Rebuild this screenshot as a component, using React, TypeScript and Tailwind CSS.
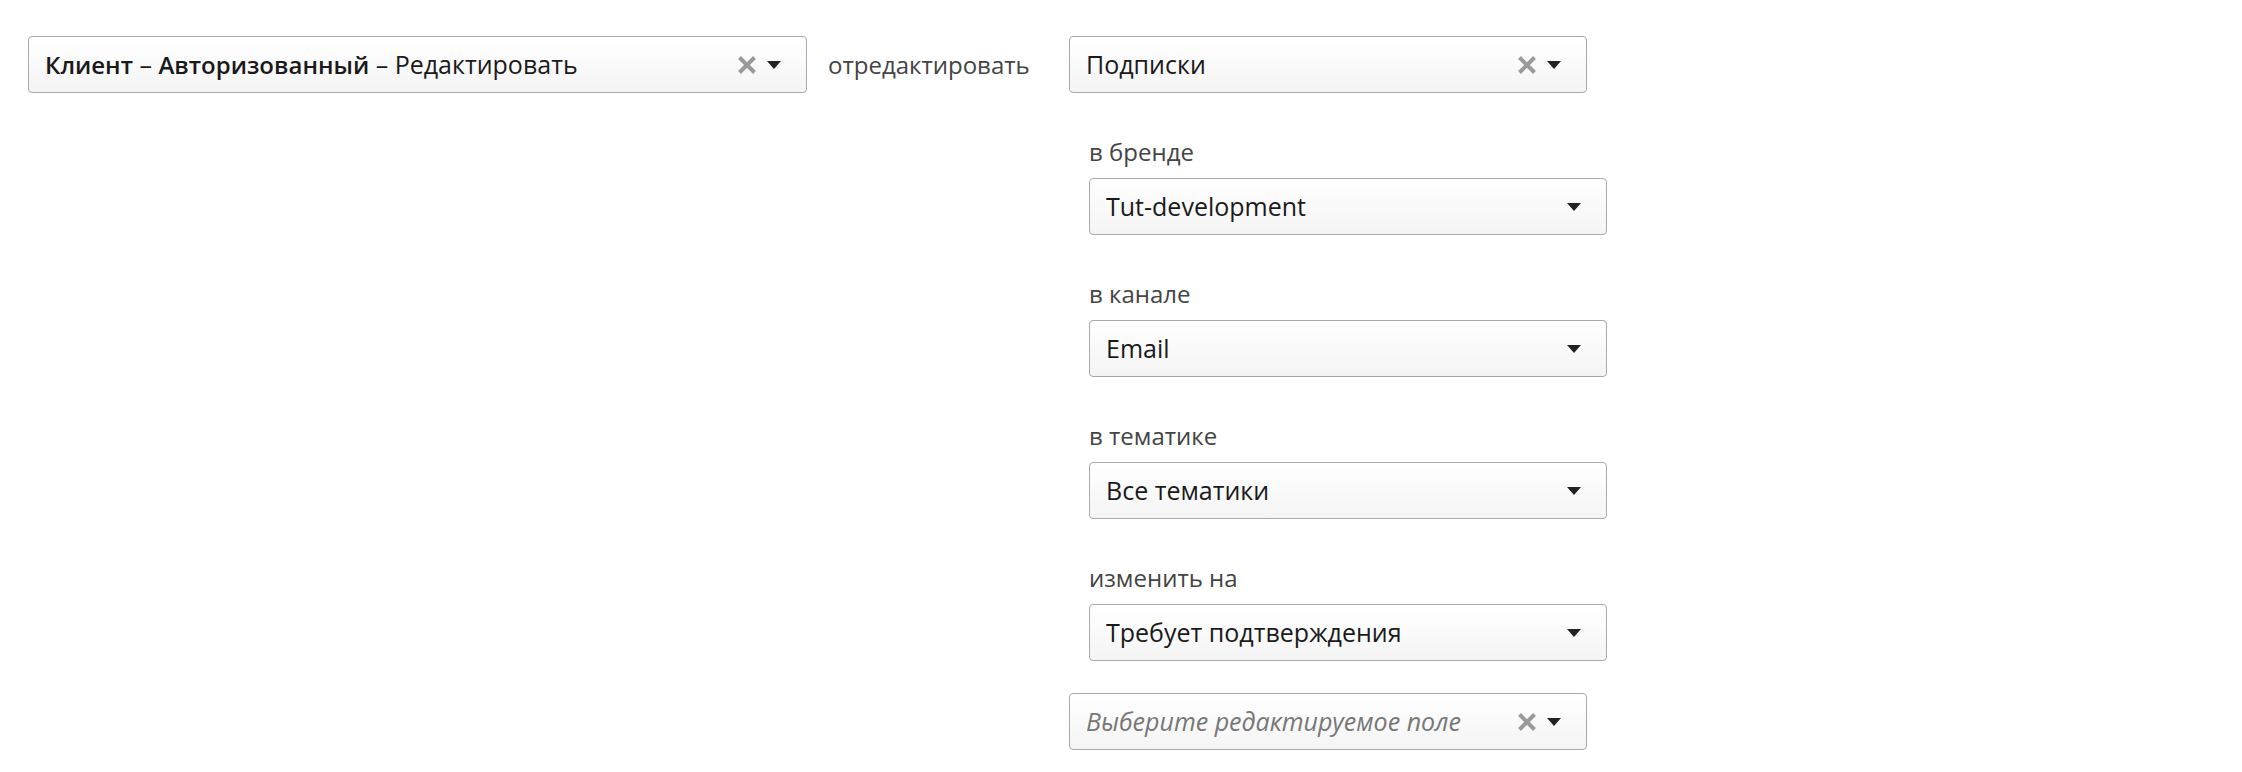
import React from "react";

type SelectProps = {
  children: React.ReactNode;
  clearable?: boolean;
  placeholder?: boolean;
};

const Caret = () => (
  <svg width="14" height="8" viewBox="0 0 14 8" className="shrink-0">
    <path d="M0 0 H14 L7 8 Z" fill="#222" />
  </svg>
);

const Clear = () => (
  <svg width="20" height="20" viewBox="0 0 20 20" className="shrink-0">
    <path d="M2.5 2.5 L17.5 17.5 M17.5 2.5 L2.5 17.5" stroke="#9a9a9a" strokeWidth="4" />
  </svg>
);

const Select: React.FC<SelectProps> = ({ children, clearable, placeholder }) => (
  <div className="flex h-[57px] w-full items-center rounded-[4px] border border-[#aaaaaa] bg-gradient-to-b from-white to-[#f4f4f4] pl-[16px] pr-[25px]">
    <div
      className={
        placeholder
          ? "flex-1 truncate text-[25px] italic text-[#777777]"
          : "flex-1 truncate text-[25px] text-[#1a1a1a]"
      }
    >
      {children}
    </div>
    {clearable && (
      <div className="mr-[10px]">
        <Clear />
      </div>
    )}
    <Caret />
  </div>
);

const Field: React.FC<{ label: string; value: string }> = ({ label, value }) => (
  <div className="mt-[44px]">
    <div className="mb-[11px] text-[24px] leading-[30px] text-[#444444]">{label}</div>
    <Select>{value}</Select>
  </div>
);

export default function App() {
  return (
    <div
      className="min-h-[772px] w-[2242px] bg-white pl-[28px] pt-[36px]"
      style={{ fontFamily: "'Open Sans', 'Noto Sans', sans-serif" }}
    >
      <div className="flex items-start">
        <div className="w-[779px]">
          <Select clearable>
            <b className="text-[24px] font-semibold">Клиент</b> – <b className="text-[24px] font-semibold">Авторизованный</b> – Редактировать
          </Select>
        </div>
        <div className="flex h-[57px] w-[262px] items-center pl-[21px] text-[24px] text-[#444444]">
          отредактировать
        </div>
        <div className="flex w-[538px] flex-col">
          <div className="w-[518px]">
            <Select clearable>Подписки</Select>
          </div>
          <div className="pl-[20px]">
            <Field label="в бренде" value="Tut-development" />
            <Field label="в канале" value="Email" />
            <Field label="в тематике" value="Все тематики" />
            <Field label="изменить на" value="Требует подтверждения" />
          </div>
          <div className="mt-[32px] w-[518px]">
            <Select clearable placeholder>
              Выберите редактируемое поле
            </Select>
          </div>
        </div>
      </div>
    </div>
  );
}
